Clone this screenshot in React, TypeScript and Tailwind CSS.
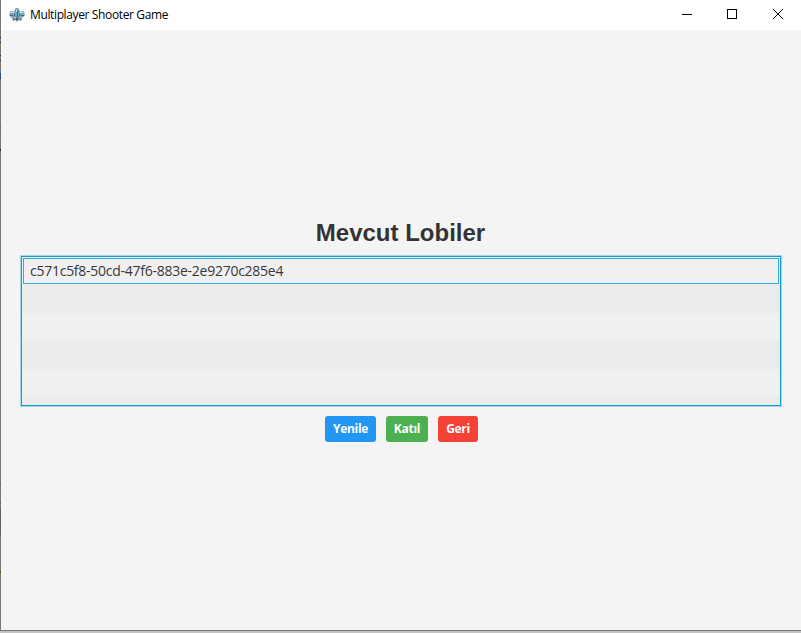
import React from "react";

const lobbies: string[] = ["c571c5f8-50cd-47f6-883e-2e9270c285e4"];

// Slivers of the window behind, seen along the left frame edge: [gap above, height, colour]
const edgeMarks: [number, number, string][] = [
  [37, 1, "#303030"],
  [4, 1, "#303030"],
  [3, 1, "#a8771c"],
  [8, 1, "#303030"],
  [4, 1, "#303030"],
  [3, 1, "#a8771c"],
  [6, 1, "#3f6fa5"],
  [1, 5, "#2c5a8c"],
  [0, 1, "#303030"],
  [48, 1, "#3f5f95"],
  [4, 1, "#3f5f95"],
  [16, 2, "#25254f"],
  [332, 1, "#555555"],
  [19, 1, "#555555"],
  [4, 27, "#5c6268"],
  [35, 2, "#8a7420"],
  [0, 1, "#4a2f25"],
];

function WindowEdge() {
  return (
    <div className="h-full w-px shrink-0 overflow-hidden bg-[#777777]">
      {edgeMarks.map(([gap, height, colour], i) => (
        <div key={i} style={{ marginTop: gap, height, background: colour }} />
      ))}
    </div>
  );
}

function ShipIcon() {
  return (
    <svg width="16" height="16" viewBox="0 0 16 16" className="shrink-0">
      <path d="M7 1h2l2 3L9.500 9h-3L5 4z" fill="#6d9eae" />
      <path d="M6 6 4 4 1 4.500 0 8l2 2.500 4 .5L8 9z" fill="#7facba" />
      <path d="m10 6 2-2 3 .5 1 3.500-2 2.500-4 .5L8 9z" fill="#7facba" />
      <path d="M6 9 3 11.500l1 2.500 2.500-1L8 15l1.500-2 2.500 1 1-2.500L10 9z" fill="#66899a" />
      <path d="M7 2h1v3H7zM2 5h3v1H2zM11 5h3v1h-3zM5 10h2v1H5zM10 10h1v1h-1z" fill="#b7e3e6" />
      <path d="M8 4h1v5H8zM1 8h3v1H1zM12 8h3v1h-3zM7 11h2v2H7zM5 7h1v2H5zM10 7h1v2h-1z" fill="#3d6482" />
      <path d="M6 5h1v2H6zM9 5h1v1H9zM3 7h1v1H3zM12 7h1v1h-1zM9 11h1v1H9zM5 12h1v1H5z" fill="#b89170" />
      <path d="M7 6h1v3H7zM4 6h1v1H4zM11 6h1v1h-1z" fill="#43b9d3" />
    </svg>
  );
}

function TitleBar() {
  return (
    <header className="flex h-[30px] shrink-0 items-center bg-white pl-2">
      <ShipIcon />
      <span className="ml-[5px] text-[12px] leading-4 tracking-[-0.37px] whitespace-nowrap text-black">
        Multiplayer Shooter Game
      </span>
      <div className="ml-auto flex h-full">
        <svg width="46" height="30" viewBox="0 0 46 30" shapeRendering="crispEdges">
          <path d="M18 14h10v1H18z" />
        </svg>
        <svg width="45" height="30" viewBox="0 0 45 30" shapeRendering="crispEdges">
          <path d="M17.5 9.5h9v9h-9z" fill="none" stroke="#000" />
        </svg>
        <svg width="46" height="30" viewBox="0 0 46 30">
          <path d="m18 9 10 10M28 9 18 19" fill="none" stroke="#000" strokeWidth="1" />
        </svg>
      </div>
    </header>
  );
}

function LobbyList() {
  return (
    <div className="mx-[19px] mt-2 flex h-[152px] flex-col border border-[#a0d8e9] bg-[#a0d8e9]">
      <div className="flex h-full flex-col overflow-hidden border border-[#0d9fd0] bg-[#f0f0f0]">
        <div className="h-7 shrink-0 px-px pt-px pb-px">
          <div className="flex h-[26px] items-center border border-[#30add8] pl-1.5 text-[14px] text-[#383838]">
            <span className="leading-5 tracking-[-0.26px] whitespace-nowrap">{lobbies[0]}</span>
          </div>
        </div>
        <div className="h-7 shrink-0 bg-[#ebebeb]" />
        <div className="h-7 shrink-0 bg-[#f0f0f0]" />
        <div className="h-7 shrink-0 bg-[#ebebeb]" />
        <div className="h-7 shrink-0 bg-[#f0f0f0]" />
        <div className="h-2 shrink-0 bg-[#ebebeb]" />
      </div>
    </div>
  );
}

export default function App() {
  return (
    <div className="flex h-[633px] w-[801px] flex-col overflow-hidden bg-[#c3c3c3] font-['Open_Sans','Noto_Sans',sans-serif]">
      <div className="flex h-[631px] border-b border-[#777777] bg-[#f4f4f4]">
        <WindowEdge />
        <div className="flex flex-1 flex-col">
          <TitleBar />
          <main className="flex flex-1 flex-col pt-[188px]">
            <h1 className="h-[29px] pr-px text-center font-['Liberation_Sans',Arial,sans-serif] text-[24px] leading-[29px] font-bold text-[#333333]">
              Mevcut Lobiler
            </h1>
            <LobbyList />
            <div className="mt-[9px] ml-[324px] flex gap-2.5 text-[12px] leading-[26px] font-bold tracking-[-0.3px] text-white">
              <button className="h-[26px] w-[51px] rounded-[3px] bg-[#2196f3]">Yenile</button>
              <button className="h-[26px] w-[42px] rounded-[3px] bg-[#4caf50]">Katıl</button>
              <button className="h-[26px] w-10 rounded-[3px] bg-[#f44336]">Geri</button>
            </div>
          </main>
        </div>
      </div>
    </div>
  );
}
